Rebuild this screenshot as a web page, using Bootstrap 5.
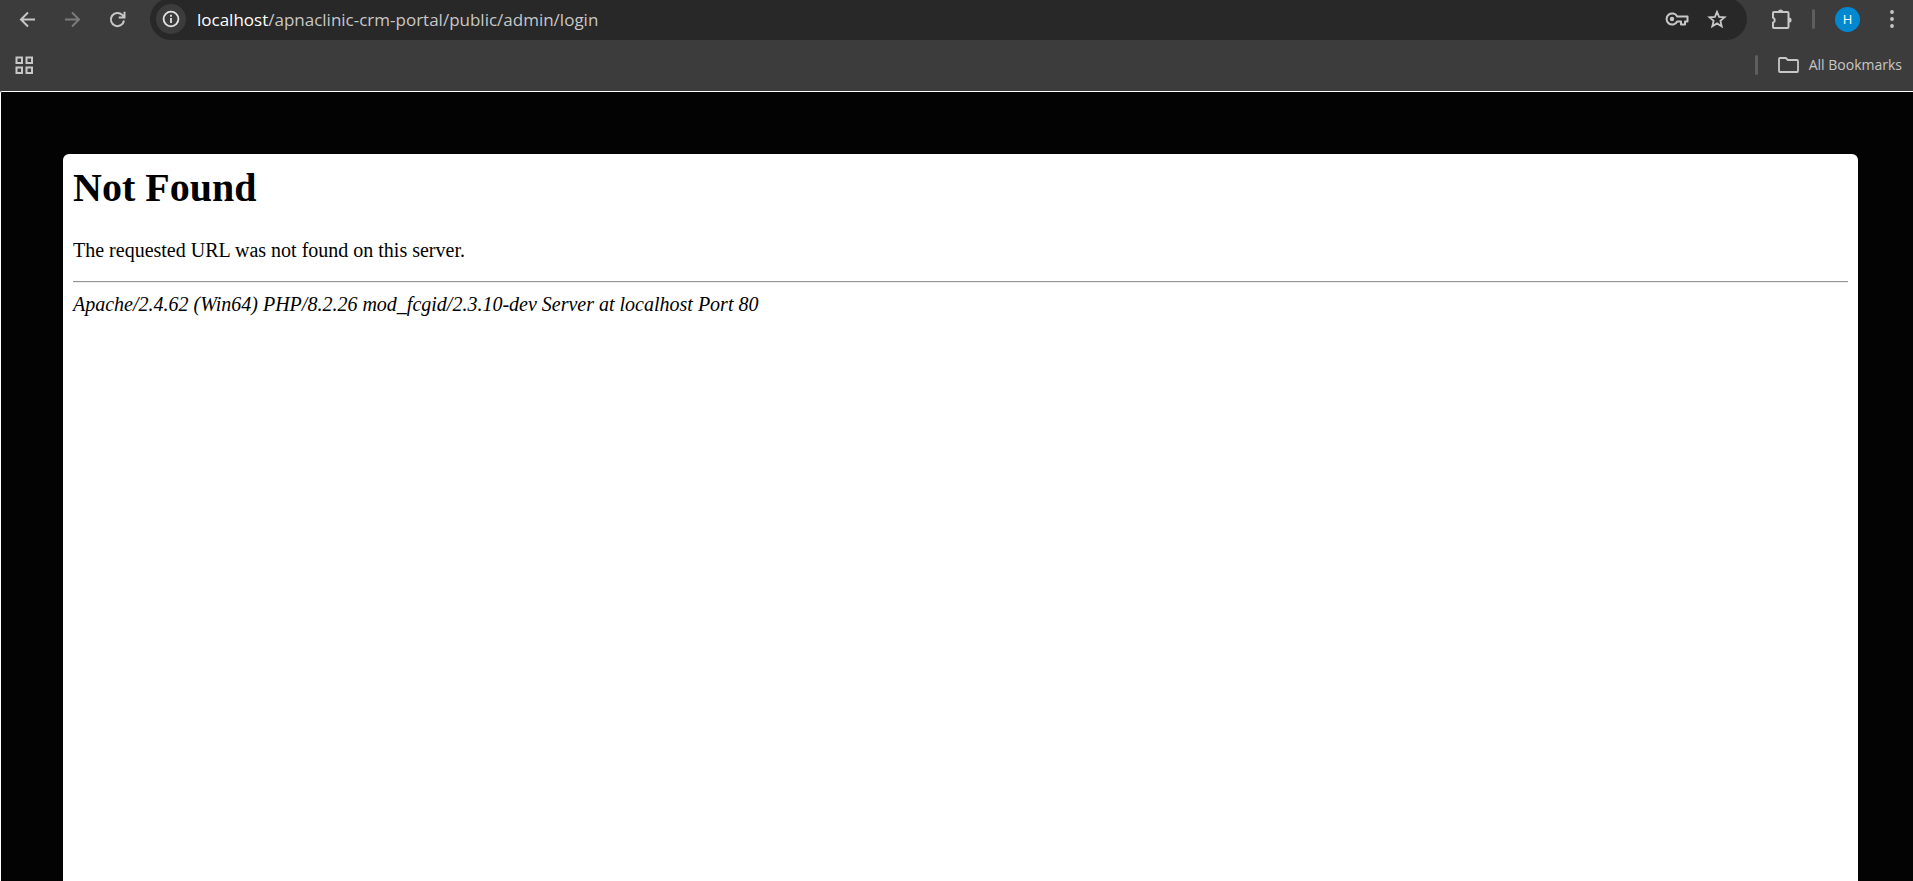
<!DOCTYPE html>
<html lang="en">
<head>
<meta charset="utf-8">
<meta name="viewport" content="width=device-width, initial-scale=1">
<title>404 Not Found</title>
<link href="https://cdn.jsdelivr.net/npm/bootstrap@5.3.0/dist/css/bootstrap.min.css" rel="stylesheet">
<style>
  body { background: #030303; font-family: "Open Sans", "Noto Sans", sans-serif; }
  svg { display: block; flex: none; }
  .chrome { background: #3c3c3c; color: #c7c7c7; }
  .toolbar { height: 38px; padding-left: 5px; padding-right: 7px; }
  .tool { width: 45px; height: 38px; color: inherit; }
  .tool-menu { width: 28px; }
  .tool-profile { margin: 0 8px 0 10px; }
  .tool:disabled { color: #7b7b7b; opacity: 1; border: 0; }
  .omnibox { height: 42px; margin: 0 12px 0 10px; padding: 0 10px 0 6px; background: #282828; border-radius: 21px; }
  .site-info { width: 30px; height: 30px; background: #3c3c3c; color: #e3e3e3; }
  .address { font-size: 17px; line-height: 24px; padding: 2px 0 0 11px; }
  .address label { color: #fff; }
  .address input { color: #c7c7c7; outline: 0; }
  .omni-action { width: 40px; height: 38px; color: inherit; }
  .divider { width: 3px; height: 20px; background: #5e5e5e; border-radius: 2px; }
  .avatar { width: 25px; height: 25px; background: #0288d1; color: #fff; font-size: 13px; line-height: 25px; }
  .bookmarks { height: 53px; padding: 1px 11px 0 15px; }
  .all-bookmarks { gap: 10px; color: inherit; font-size: 14px; line-height: 20px; }
  .viewport { border-top: 1px solid #fff; border-left: 1px solid #fff; border-top-left-radius: 2px; padding: 62px 55px 0 62px; }
  .sheet { background: #fff; color: #000; border-radius: 6px 6px 0 0; padding: 11px 10px 0; font-family: "Liberation Serif", "Times New Roman", serif; font-size: 20px; line-height: 23px; }
  .sheet h1 { font-size: 40px; line-height: 46px; font-weight: 700; margin: 0 0 28px; }
  .sheet p { margin: 0 0 19px; }
  .sheet hr { margin: 0 0 10px; border: 0; border-top: 1px solid #949494; border-bottom: 1px solid #eee; opacity: 1; }
</style>
</head>
<body class="min-vh-100 d-flex flex-column">
<header class="chrome">
  <div class="toolbar d-flex align-items-center">
    <button type="button" class="tool btn p-0 border-0 d-flex align-items-center justify-content-center" aria-label="Back">
      <svg width="17" height="17" viewBox="0 0 17 17" fill="none" stroke="currentColor" stroke-width="2"><path d="M16 8.500H2.500M9 1.500l-7 7 7 7"/></svg>
    </button>
    <button type="button" class="tool btn p-0 border-0 d-flex align-items-center justify-content-center" aria-label="Forward" disabled>
      <svg width="17" height="17" viewBox="0 0 17 17" fill="none" stroke="currentColor" stroke-width="2"><path d="M1 8.500h13.500M8 1.500l7 7-7 7"/></svg>
    </button>
    <button type="button" class="tool btn p-0 border-0 d-flex align-items-center justify-content-center" aria-label="Reload">
      <svg width="17" height="17" viewBox="0 0 17 17" fill="none" stroke="currentColor" stroke-width="2"><path d="M15 9.500A6.600 6.600 0 1 1 13.200 3.900L15 5.800M15.500 .8v5.700H9.700"/></svg>
    </button>
    <form class="omnibox d-flex align-items-center flex-grow-1" onsubmit="return false">
      <button type="button" class="site-info btn p-0 border-0 rounded-circle d-flex align-items-center justify-content-center" aria-label="View site information">
        <svg width="18" height="18" viewBox="0 0 18 18" fill="none" stroke="currentColor" stroke-width="1.800"><circle cx="9" cy="9" r="7.400"/><path d="M9 8v5M9 4.800v1.900"/></svg>
      </button>
      <div class="address d-flex align-items-center flex-grow-1">
        <label for="url">localhost</label>
        <input id="url" type="text" class="flex-grow-1 bg-transparent border-0 p-0" value="/apnaclinic-crm-portal/public/admin/login" spellcheck="false">
      </div>
      <button type="button" class="omni-action btn p-0 border-0 d-flex align-items-center justify-content-center" aria-label="Passwords">
        <svg width="24" height="16" viewBox="0 0 24 16" fill="none" stroke="currentColor" stroke-width="2"><path d="M12.200 5.500A5.600 5.600 0 1 0 12.200 10.500H16V13.500H20V10.500H22.500V5.500Z" stroke-linejoin="round"/><circle cx="7" cy="8" r="2.200" fill="currentColor" stroke="none"/></svg>
      </button>
      <button type="button" class="omni-action btn p-0 border-0 d-flex align-items-center justify-content-center" aria-label="Bookmark this tab">
        <svg width="20" height="20" viewBox="0 0 20 20" fill="none" stroke="currentColor" stroke-width="1.800"><path d="M10 2.800l2.100 5 5.500.5-4.200 3.600 1.300 5.400L10 14.400l-4.700 2.900 1.300-5.400-4.200-3.600 5.500-.5z"/></svg>
      </button>
    </form>
    <button type="button" class="tool btn p-0 border-0 d-flex align-items-center justify-content-center" aria-label="Extensions">
      <svg width="22" height="22" viewBox="0 0 22 22"><path d="M3 4h13.500a1 1 0 0 1 1 1v14a1 1 0 0 1-1 1H3a1 1 0 0 1-1-1v-4.200a2.800 2.800 0 0 0 0-5.200V5a1 1 0 0 1 1-1z" fill="none" stroke="currentColor" stroke-width="2"/><path d="M7 4a2.600 2.600 0 0 1 5.200 0zM18 9.500a2.600 2.600 0 0 1 0 5.200z" fill="currentColor"/></svg>
    </button>
    <span class="divider ms-2"></span>
    <button type="button" class="tool tool-profile btn p-0 border-0 d-flex align-items-center justify-content-center" aria-label="Profile H">
      <span class="avatar rounded-circle text-center">H</span>
    </button>
    <button type="button" class="tool tool-menu btn p-0 border-0 d-flex align-items-center justify-content-center" aria-label="Menu">
      <svg width="4" height="18" viewBox="0 0 4 18" fill="currentColor"><circle cx="2" cy="2" r="1.900"/><circle cx="2" cy="9" r="1.900"/><circle cx="2" cy="16" r="1.900"/></svg>
    </button>
  </div>
  <nav class="bookmarks d-flex align-items-center" aria-label="Bookmarks">
    <button type="button" class="btn p-0 border-0 text-reset" aria-label="Apps">
      <svg width="19" height="19" viewBox="0 0 19 19" fill="none" stroke="currentColor" stroke-width="2"><path d="M1.500 1.500h5.500v5.500h-5.500zM11.500 1.500h5.500v5.500h-5.500zM1.500 11.500h5.500v5.500h-5.500zM11.500 11.500h5.500v5.500h-5.500z"/></svg>
    </button>
    <span class="divider ms-auto me-3"></span>
    <button type="button" class="all-bookmarks btn p-0 border-0 d-flex align-items-center ms-1">
      <svg width="21" height="16" viewBox="0 0 21 16" fill="none" stroke="currentColor" stroke-width="1.800"><path d="M2 1h5.800l2 2H19a1 1 0 0 1 1 1v10a1 1 0 0 1-1 1H2a1 1 0 0 1-1-1V2a1 1 0 0 1 1-1z"/></svg>
      All Bookmarks
    </button>
  </nav>
</header>
<main class="viewport d-flex flex-column flex-grow-1">
  <article class="sheet flex-grow-1">
    <h1>Not Found</h1>
    <p>The requested URL was not found on this server.</p>
    <hr>
    <address class="fst-italic m-0">Apache/2.4.62 (Win64) PHP/8.2.26 mod_fcgid/2.3.10-dev Server at localhost Port 80</address>
  </article>
</main>
<script src="https://cdn.jsdelivr.net/npm/bootstrap@5.3.0/dist/js/bootstrap.bundle.min.js"></script>
</body>
</html>
